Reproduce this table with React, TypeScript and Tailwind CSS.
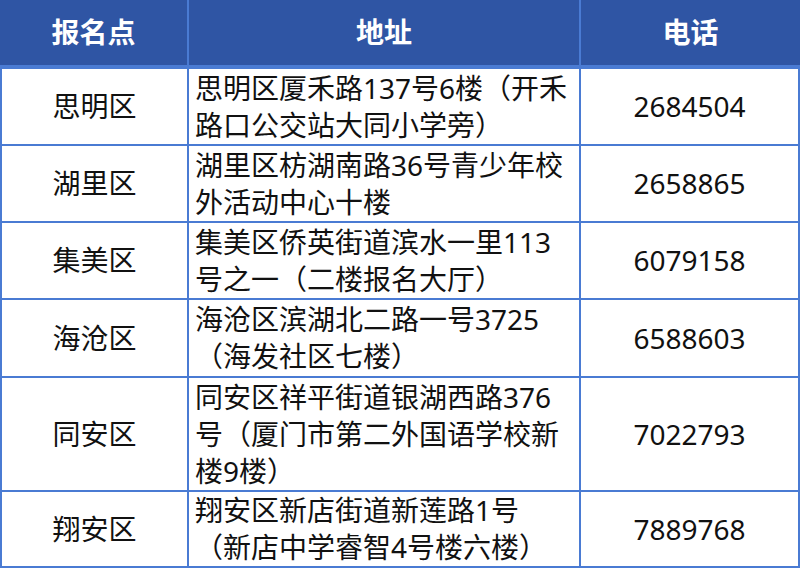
const rows = [
  { area: "思明区", addr: ["思明区厦禾路137号6楼（开禾", "路口公交站大同小学旁）"], tel: "2684504", h: "h-[75px]" },
  { area: "湖里区", addr: ["湖里区枋湖南路36号青少年校", "外活动中心十楼"], tel: "2658865", h: "h-[75px]" },
  { area: "集美区", addr: ["集美区侨英街道滨水一里113", "号之一（二楼报名大厅）"], tel: "6079158", h: "h-[75px]" },
  { area: "海沧区", addr: ["海沧区滨湖北二路一号3725", "（海发社区七楼）"], tel: "6588603", h: "h-[76px]" },
  {
    area: "同安区",
    addr: ["同安区祥平街道银湖西路376", "号（厦门市第二外国语学校新", "楼9楼）"],
    tel: "7022793",
    h: "h-[112px]",
  },
  { area: "翔安区", addr: ["翔安区新店街道新莲路1号", "（新店中学睿智4号楼六楼）"], tel: "7889768", h: "h-[74px]" },
]

export default function App() {
  return (
    <div
      className="h-[568px] w-[800px] bg-[#4a7bd3] px-[2px] pb-[2px] text-[28px] leading-[37px] text-[#111]"
      style={{ fontFamily: '"Noto Sans", "Noto Sans CJK SC", sans-serif' }}
    >
      <div className="grid grid-cols-[185px_390px_217px] gap-[2px]">
        <div className="-mx-[2px] col-span-3 grid h-[67px] grid-cols-[187px_390px_219px] gap-[2px] bg-[#4a7bd3] pb-[2px]">
          <div className="flex items-center justify-center bg-[#2f55a4] font-bold text-white">报名点</div>
          <div className="flex items-center justify-center bg-[#2f55a4] font-bold text-white">地址</div>
          <div className="flex items-center justify-center bg-[#2f55a4] font-bold text-white">电话</div>
        </div>
        {rows.map((r) => (
          <div key={r.area} className="contents">
            <div className={"flex items-center justify-center bg-white " + r.h}>{r.area}</div>
            <div className={"flex flex-col justify-center bg-white pl-[6px] " + r.h}>
              {r.addr.map((l, i) => (
                <span key={i} className="whitespace-nowrap">
                  {l}
                </span>
              ))}
            </div>
            <div className={"flex items-center justify-center bg-white " + r.h}>{r.tel}</div>
          </div>
        ))}
      </div>
    </div>
  )
}
